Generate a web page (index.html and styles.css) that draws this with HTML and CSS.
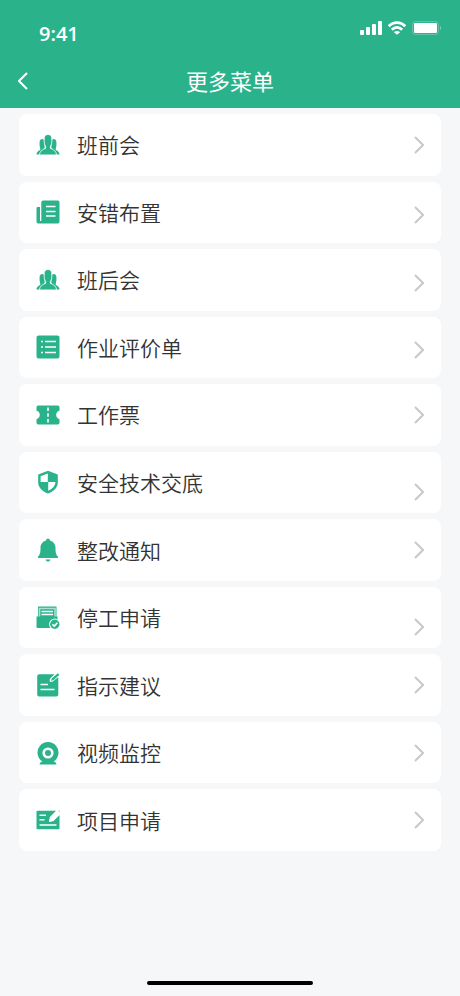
FILE: index.html
```html
<!DOCTYPE html>
<html lang="zh-CN">
<head>
  <meta charset="UTF-8">
  <meta name="viewport" content="width=device-width, initial-scale=1.0">
  <title>更多菜单</title>
  <link rel="stylesheet" href="styles.css">
</head>
<body>
  <!-- shared icons -->
  <svg class="sprite" aria-hidden="true">
    <symbol id="people" viewBox="0 0 24 24">
      <path d="M3.600 9.500C3.200 5.500 8.200 4.800 8.600 8.500V15.500L4.500 21.500H.5C.5 19 2 18.200 4.200 17V15C3.500 13.500 3.500 11.500 3.600 9.500zM20.400 9.500C20.800 5.500 15.800 4.800 15.400 8.500V15.500L19.500 21.500H23.500C23.500 19 22 18.200 19.800 17V15C20.500 13.500 20.500 11.500 20.400 9.500z"/>
      <path class="figure" d="M12 1.500c2.700 0 4 1.900 3.800 4.500.2 3.400-.2 5.600-1.400 7.400v2c3.600 1 5.800 3.100 6.200 6.500H3.400c.4-3.400 2.600-5.500 6.200-6.500v-2C8.400 11.600 8 9.400 8.200 6 8 3.400 9.300 1.500 12 1.500z"/>
    </symbol>
    <symbol id="arrow" viewBox="0 0 10 18">
      <path d="M1 1l8 8-8 8"/>
    </symbol>
  </svg>

  <header class="header">
    <div class="status">
      <span class="time">9:41</span>
      <div class="signals">
        <svg width="22" height="14" viewBox="0 0 22 14" fill="#fff">
          <rect x="0" y="9" width="4" height="5" rx="1"/>
          <rect x="6" y="6" width="4" height="8" rx="1"/>
          <rect x="12" y="3" width="4" height="11" rx="1"/>
          <rect x="18" y="0" width="4" height="14" rx="1"/>
        </svg>
        <svg width="18" height="14" viewBox="0 0 18 14" fill="none" stroke="#fff" stroke-width="2.800">
          <path d="M.8 5.200C5.300.4 12.700.4 17.200 5.200M3.900 8.700c2.900-3 7.300-3 10.200 0"/>
          <path d="M9 13.800L5.900 11.200c1.700-1.600 4.500-1.600 6.200 0z" fill="#fff" stroke="none"/>
        </svg>
        <svg width="30" height="14" viewBox="0 0 30 14" fill="#fff">
          <rect x=".5" y=".5" width="26" height="13" rx="3" fill="none" stroke="#fff" opacity=".25"/>
          <rect x="2" y="2" width="23" height="10" rx="1"/>
          <path d="M28 5c1.500.5 1.500 3.500 0 4z" opacity=".4"/>
        </svg>
      </div>
    </div>
    <nav class="navbar">
      <a class="back" href="#" aria-label="返回">
        <svg width="10" height="18" viewBox="0 0 10 18"><path d="M9 1L1 9l8 8"/></svg>
      </a>
      <h1>更多菜单</h1>
    </nav>
  </header>

  <main class="menu">
    <a class="item" href="#">
      <svg class="icon"><use href="#people"/></svg>
      <span>班前会</span>
      <svg class="arrow"><use href="#arrow"/></svg>
    </a>
    <a class="item" href="#">
      <svg class="icon" viewBox="0 0 24 24">
        <path d="M7.200.5h14.600q1.700 0 1.700 1.700v19.600q0 1.700-1.700 1.700H2.200q-1.700 0-1.700-1.700V8.200q0-1.200 1.200-1.200H4v14h1.300V2.200q0-1.700 1.900-1.700z"/>
        <path class="line" d="M10 6.500h9.500M10 11.500h9.500M10 16h9.500"/>
      </svg>
      <span>安错布置</span>
      <svg class="arrow low"><use href="#arrow"/></svg>
    </a>
    <a class="item" href="#">
      <svg class="icon"><use href="#people"/></svg>
      <span>班后会</span>
      <svg class="arrow low"><use href="#arrow"/></svg>
    </a>
    <a class="item" href="#">
      <svg class="icon" viewBox="0 0 24 24">
        <rect x=".5" y=".5" width="23" height="23" rx="2"/>
        <path class="line" d="M5 6.500h2M9 6.500h11M5 12h2M9 12h11M5 17.500h2M9 17.500h11"/>
      </svg>
      <span>作业评价单</span>
      <svg class="arrow low"><use href="#arrow"/></svg>
    </a>
    <a class="item" href="#">
      <svg class="icon" viewBox="0 0 24 24">
        <path d="M2.200 2.500h19.600q1.700 0 1.700 1.700v3.600c-4.400 1-4.400 7.400 0 8.400v3.600q0 1.700-1.700 1.700H2.200Q.5 21.500.5 19.800v-3.600c4.400-1 4.400-7.400 0-8.400V4.200q0-1.700 1.700-1.700z"/>
        <path class="line" d="M12 4.500v3.500M12 10.300v3.500M12 16v3.500"/>
      </svg>
      <span>工作票</span>
      <svg class="arrow"><use href="#arrow"/></svg>
    </a>
    <a class="item" href="#">
      <svg class="icon" viewBox="0 0 24 24">
        <path d="M12 .8l9.800 3.600v8c0 5.200-4.400 8.900-9.800 11.100C6.600 21.300 2.200 17.600 2.200 12.400v-8z"/>
        <path class="hole" d="M11.800 3.600v8.500H4.600V6.200zM12.200 12.100h7.200c0 3.900-3.200 6.900-7.200 8.700z"/>
      </svg>
      <span>安全技术交底</span>
      <svg class="arrow bottom"><use href="#arrow"/></svg>
    </a>
    <a class="item" href="#">
      <svg class="icon" viewBox="0 0 24 24">
        <path d="M12 .6c1.100 0 1.800.7 1.800 1.900 3.600.9 5.700 3.700 5.700 7.300 0 4.900.6 7.200 2.500 8.800v1.400H2v-1.400c1.900-1.600 2.500-3.900 2.500-8.800 0-3.600 2.100-6.400 5.700-7.300 0-1.200.7-1.900 1.800-1.900zM9.500 21.500h5c-.3 1.300-1.200 2-2.500 2s-2.200-.7-2.500-2z"/>
      </svg>
      <span>整改通知</span>
      <svg class="arrow"><use href="#arrow"/></svg>
    </a>
    <a class="item" href="#">
      <svg class="icon" viewBox="0 0 24 24">
        <path d="M2 .5h18.500v10h1V21q0 1-1 1h-19q-1 0-1-1V10.500H2z"/>
        <path class="line" d="M3.500 10.500V2.500h15.500v8" opacity=".6"/>
        <path class="line" d="M5.500 5.500h11.500M5.500 8.500h11.500"/>
        <circle class="hole" cx="18.800" cy="18.300" r="5.800"/>
        <circle cx="18.800" cy="18.300" r="4.700"/>
        <path class="line" d="M16.400 18.300l1.900 1.800 3.100-3.400"/>
      </svg>
      <span>停工申请</span>
      <svg class="arrow bottom"><use href="#arrow"/></svg>
    </a>
    <a class="item" href="#">
      <svg class="icon" viewBox="0 0 24 24">
        <path d="M3.200 1.200H18.500L13.800 6v2.800h2.700L22.300 4v17.500q0 2-2 2H3.200q-2 0-2-2V3.200q0-2 2-2z"/>
        <path class="line" d="M4.500 11.500h7.500M4.500 16.500h14"/>
        <path d="M15 7.800l.8-2.300L21.800.3l1.600 1.500-6 5.500z"/>
      </svg>
      <span>指示建议</span>
      <svg class="arrow"><use href="#arrow"/></svg>
    </a>
    <a class="item" href="#">
      <svg class="icon" viewBox="0 0 24 24">
        <path d="M6.500 20.500a10.500 10.500 0 1 1 11 0c1.800.4 2.800 1.400 3 3h-17c.2-1.600 1.200-2.600 3-3z"/>
        <circle class="hole" cx="12" cy="12" r="5.600"/>
        <circle cx="12" cy="12" r="3"/>
      </svg>
      <span>视频监控</span>
      <svg class="arrow"><use href="#arrow"/></svg>
    </a>
    <a class="item" href="#">
      <svg class="icon" viewBox="0 0 24 24">
        <path d="M1.500 2.800h18.500L14 9l-1.200 5 4.700-1 6-6v13.200q0 1-1 1h-21q-1 0-1-1V3.800q0-1 1-1z"/>
        <path class="line" d="M3.500 7.200h6.500M3.500 11.800h5M3.500 17h17"/>
        <path class="hole" d="M13 13.800l1.200-4.600 6.500-6.500 3.300 3.200-7 7z"/>
        <path d="M22.200 2.800h1.300v1.300z"/>
      </svg>
      <span>项目申请</span>
      <svg class="arrow"><use href="#arrow"/></svg>
    </a>
  </main>

  <footer class="footer">
    <div class="home-bar"></div>
  </footer>
</body>
</html>
```
FILE: styles.css
```css
* {
  margin: 0;
  padding: 0;
  box-sizing: border-box;
}

body {
  min-height: 100vh;
  display: flex;
  flex-direction: column;
  background-color: #f5f7f9;
  color: #333;
  font-family: "Noto Sans CJK SC", sans-serif;
}

a {
  color: inherit;
  text-decoration: none;
}

svg {
  display: block;
}

.sprite {
  width: 0;
  height: 0;
  position: absolute;
}

/* header */
.header {
  background-color: #2ab38a;
  color: #fff;
}

.status {
  height: 54px;
  padding: 20px 18px 0 39px;
  display: flex;
  justify-content: space-between;
  align-items: flex-start;
}

.time {
  font-family: "Open Sans", sans-serif;
  font-size: 20px;
  line-height: 28px;
  font-weight: 600;
}

.signals {
  display: flex;
  gap: 6px;
  padding-top: 1px;
}

.navbar {
  height: 54px;
  padding: 0 18px;
  display: grid;
  grid-template-columns: 40px 1fr 40px;
  align-items: center;
}

.back svg {
  fill: none;
  stroke: #fff;
  stroke-width: 2;
}

.navbar h1 {
  padding-bottom: 2px;
  font-size: 22px;
  line-height: 32px;
  font-weight: 400;
  text-align: center;
}

/* menu list, the rows share the free height */
.menu {
  flex: 1;
  display: grid;
  grid-auto-rows: 1fr;
  gap: 6px;
  padding: 6px 19px 130px;
}

.item {
  display: flex;
  align-items: center;
  gap: 17px;
  padding: 0 17px;
  background-color: #fff;
  border-radius: 8px;
  font-size: 21px;
  line-height: 32px;
  font-weight: 350;
}

.item span {
  flex: 1;
  padding-bottom: 1px;
}

.icon {
  width: 24px;
  height: 24px;
  fill: #2ab38a;
}

.icon .line {
  fill: none;
  stroke: #fff;
  stroke-width: 1.6;
}

.icon .hole {
  fill: #fff;
}

.figure {
  stroke: #fff;
  stroke-width: 0.8;
}

.arrow {
  width: 10px;
  height: 18px;
  fill: none;
  stroke: #c8c8c8;
  stroke-width: 2;
}

.arrow.low {
  margin-top: 6px;
}

.arrow.bottom {
  align-self: flex-end;
  margin-bottom: 12px;
}

/* home indicator */
.footer {
  padding-bottom: 11px;
}

.home-bar {
  width: 36%;
  height: 4px;
  margin: 0 auto;
  border-radius: 2px;
  background-color: #000;
}
```
